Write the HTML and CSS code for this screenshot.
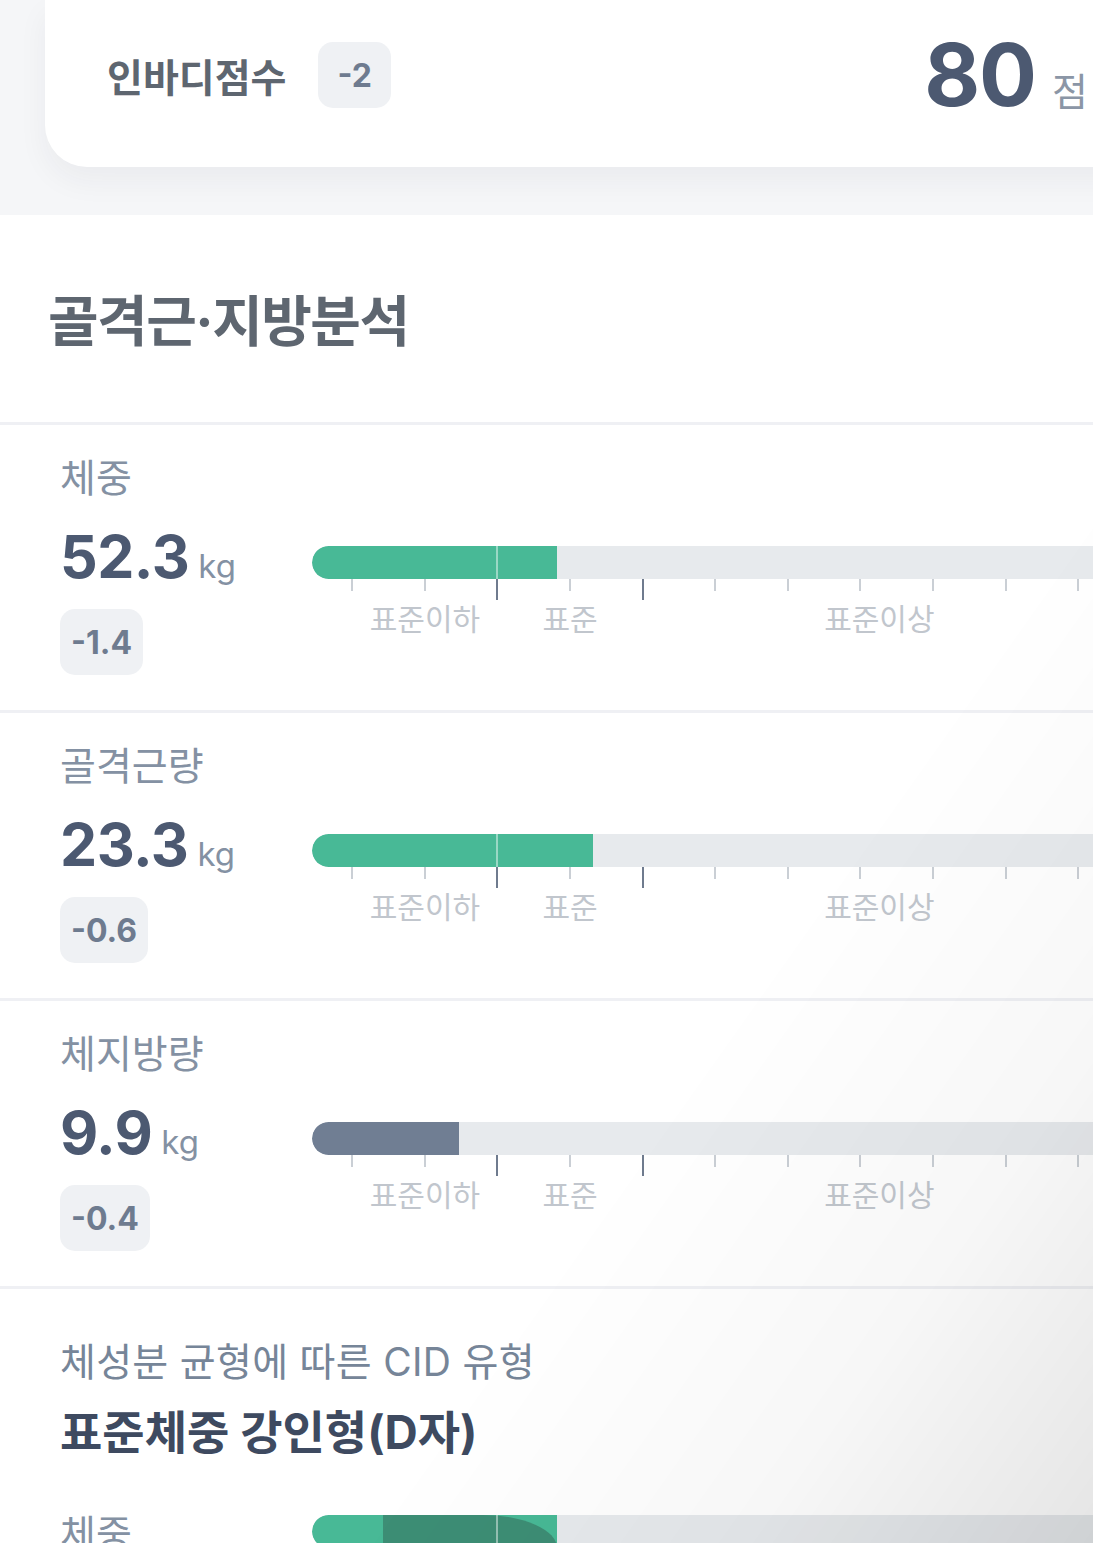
FILE: index.html
```html
<!DOCTYPE html>
<html lang="ko">
<head>
<meta charset="utf-8">
<title>인바디 골격근·지방분석</title>
<link rel="stylesheet" href="styles.css">
</head>
<body>
<div class="top">
  <div class="score-card">
    <div class="score-left">
      <span class="score-title">인바디점수</span>
      <span class="chip chip-score">-2</span>
    </div>
    <div class="score-right">
      <span class="score-num">80</span>
      <span class="score-unit">점</span>
    </div>
  </div>
</div>

<section class="analysis">
  <h2 class="sec-title">골격근·지방분석</h2>

  <div class="metric">
    <div class="metric-info">
      <div class="metric-label">체중</div>
      <div class="metric-value"><span class="num">52.3</span><span class="unit">kg</span></div>
      <span class="chip">-1.4</span>
    </div>
    <div class="metric-chart">
      <div class="track"><div class="fill fill-green" style="width:245px"><i class="divider"></i></div></div>
      <div class="ticks"><i></i><i></i><i class="major"></i><i></i><i class="major"></i><i></i><i></i><i></i><i></i><i></i><i></i></div>
      <div class="scale-labels"><span class="lbl-low">표준이하</span><span class="lbl-mid">표준</span><span class="lbl-high">표준이상</span></div>
    </div>
  </div>

  <div class="metric">
    <div class="metric-info">
      <div class="metric-label">골격근량</div>
      <div class="metric-value"><span class="num">23.3</span><span class="unit">kg</span></div>
      <span class="chip">-0.6</span>
    </div>
    <div class="metric-chart">
      <div class="track"><div class="fill fill-green" style="width:281px"><i class="divider"></i></div></div>
      <div class="ticks"><i></i><i></i><i class="major"></i><i></i><i class="major"></i><i></i><i></i><i></i><i></i><i></i><i></i></div>
      <div class="scale-labels"><span class="lbl-low">표준이하</span><span class="lbl-mid">표준</span><span class="lbl-high">표준이상</span></div>
    </div>
  </div>

  <div class="metric">
    <div class="metric-info">
      <div class="metric-label">체지방량</div>
      <div class="metric-value"><span class="num">9.9</span><span class="unit">kg</span></div>
      <span class="chip">-0.4</span>
    </div>
    <div class="metric-chart">
      <div class="track"><div class="fill fill-slate" style="width:147px"></div></div>
      <div class="ticks"><i></i><i></i><i class="major"></i><i></i><i class="major"></i><i></i><i></i><i></i><i></i><i></i><i></i></div>
      <div class="scale-labels"><span class="lbl-low">표준이하</span><span class="lbl-mid">표준</span><span class="lbl-high">표준이상</span></div>
    </div>
  </div>

  <div class="cid">
    <div class="cid-sub">체성분 균형에 따른 CID 유형</div>
    <div class="cid-title">표준체중 강인형(D자)</div>
    <div class="cid-row">
      <div class="metric-label cid-label">체중</div>
      <div class="track cid-track">
        <div class="fill fill-green" style="width:245px">
          <i class="band"></i>
          <i class="divider"></i>
        </div>
      </div>
    </div>
  </div>
</section>
<div class="shade"></div>
</body>
</html>
```

FILE: styles.css
```css
html, body {
  margin: 0;
  padding: 0;
  overflow: hidden;
}
body {
  width: 1093px;
  height: 1543px;
  background: #ffffff;
  font-family: Inter, "Noto Sans CJK KR", "Noto Sans", sans-serif;
  color: #4c5971;
}

/* ---------- top score card ---------- */
.top {
  background: #f5f6f8;
  height: 215px;
  overflow: hidden;
}
.score-card {
  margin-left: 45px;
  margin-right: -45px;
  height: 167px;
  box-sizing: border-box;
  padding: 0 50px 17px 62px;
  background: #ffffff;
  border-radius: 0 0 0 42px;
  box-shadow: 0 14px 30px rgba(30, 40, 60, 0.05);
  display: flex;
  align-items: center;
  justify-content: space-between;
}
.score-left {
  display: flex;
  align-items: center;
  gap: 32px;
}
.score-title {
  font-size: 39px;
  font-weight: 700;
  color: #5e6670;
}
.score-right {
  display: flex;
  align-items: baseline;
  gap: 16px;
}
.score-num {
  font-size: 86px;
  font-weight: 700;
  color: #4c5971;
  letter-spacing: -1px;
  line-height: 1;
}
.score-unit {
  font-size: 39px;
  color: #8b96a6;
}

.chip {
  display: inline-flex;
  align-items: center;
  height: 66px;
  padding: 0 11px;
  background: #eff1f4;
  border-radius: 15px;
  font-size: 32px;
  font-weight: 700;
  color: #6e7b8f;
  box-sizing: border-box;
}
.chip-score {
  padding: 0 19px;
}

/* ---------- analysis ---------- */
.analysis {
  background: #ffffff;
}
.sec-title {
  margin: 0;
  height: 210px;
  box-sizing: border-box;
  padding: 0 0 4px 48px;
  display: flex;
  align-items: center;
  font-size: 55px;
  font-weight: 700;
  color: #5e6670;
  letter-spacing: -1.5px;
  border-bottom: 3px solid #eff0f4;
}

.metric {
  display: flex;
  height: 288px;
  box-sizing: border-box;
  border-bottom: 3px solid #eff0f4;
}
.metric-info {
  width: 312px;
  flex: none;
  box-sizing: border-box;
  padding: 30px 0 0 60px;
  display: flex;
  flex-direction: column;
  align-items: flex-start;
}
.metric-label {
  font-size: 39px;
  line-height: 46px;
  color: #8491a3;
}
.metric-value {
  margin-top: 28px;
  display: flex;
  align-items: baseline;
  gap: 9px;
  line-height: 56px;
}
.metric-value .num {
  font-size: 59px;
  font-weight: 700;
  color: #4c5971;
  letter-spacing: -0.5px;
}
.metric-value .unit {
  font-size: 33px;
  color: #8491a3;
}
.metric-info .chip {
  margin-top: 15px;
}

.metric-chart {
  flex: none;
  width: 900px;
  padding-top: 121px;
}
.track {
  height: 33px;
  background: #e7eaed;
  border-radius: 17px 0 0 17px;
  overflow: hidden;
  display: flex;
}
.fill {
  position: relative;
  height: 100%;
  border-radius: 17px 0 0 17px;
  overflow: hidden;
}
.fill-green { background: #48b996; }
.fill-slate { background: #707e93; }
.divider {
  position: absolute;
  top: 0;
  bottom: 0;
  left: 184px;
  width: 2px;
  background: rgba(255, 255, 255, 0.45);
}

.ticks {
  display: grid;
  grid-template-columns: repeat(11, 72.6px);
  padding-left: 4px;
  height: 22px;
  align-items: start;
}
.ticks i {
  justify-self: center;
  width: 2px;
  height: 12px;
  background: #cacfd5;
}
.ticks i.major {
  height: 21px;
  background: #6f7b8e;
}

.scale-labels {
  display: grid;
  grid-template-columns: repeat(11, 72.6px);
  padding-left: 4px;
  font-size: 30px;
  line-height: 36px;
  color: #c1c6cd;
}
.scale-labels span { grid-row: 1; white-space: nowrap; }
.lbl-low { grid-column: 1 / 4; text-align: center; }
.lbl-mid { grid-column: 3 / 6; text-align: center; }
.lbl-high { grid-column: 8 / 12; text-align: left; }

/* ---------- CID ---------- */
.cid {
  padding: 50px 0 0 60px;
}
.cid-sub {
  font-size: 39px;
  line-height: 46px;
  color: #768598;
  letter-spacing: 0.3px;
}
.cid-title {
  margin-top: 20px;
  font-size: 46px;
  line-height: 54px;
  font-weight: 700;
  color: #3e4a60;
}
.cid-row {
  margin-top: 52px;
  display: flex;
  align-items: flex-start;
}
.cid-label {
  width: 252px;
  flex: none;
}
.cid-track {
  margin-top: 4px;
  width: 830px;
  flex: none;
}
.band {
  position: absolute;
  top: 0;
  bottom: 0;
  left: 71px;
  right: 0;
  background: #3d8e75;
  border-top-right-radius: 90px 40px;
}

/* ---------- overlay shading ---------- */
.shade {
  position: fixed;
  inset: 0;
  pointer-events: none;
  background: linear-gradient(to bottom right, rgba(0,0,0,0) 66%, rgba(0,0,0,0.03) 84%, rgba(0,0,0,0.1) 100%);
}
```
